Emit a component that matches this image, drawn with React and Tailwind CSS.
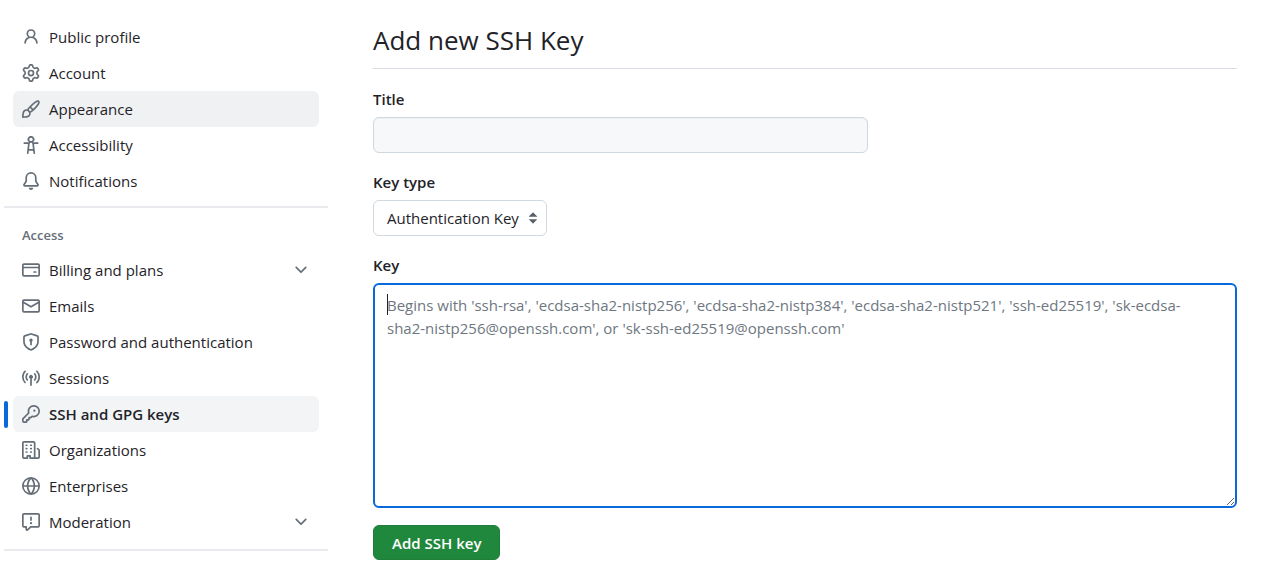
import React, { useState } from 'react';

const icons = {
    person: 'M10.561 8.073a6.005 6.005 0 0 1 3.432 5.142.75.75 0 1 1-1.498.07 4.5 4.5 0 0 0-8.99 0 .75.75 0 0 1-1.498-.07 6.004 6.004 0 0 1 3.431-5.142 3.999 3.999 0 1 1 5.123 0ZM10.5 5a2.5 2.5 0 1 0-5 0 2.5 2.5 0 0 0 5 0Z',
    gear: 'M8 0a8.2 8.2 0 0 1 .701.031C9.444.095 9.99.645 10.16 1.29l.288 1.107c.018.066.079.158.212.224.231.114.454.243.668.386.123.082.233.09.299.071l1.103-.303c.644-.176 1.392.021 1.82.63.27.385.506.792.704 1.218.315.675.111 1.422-.364 1.891l-.814.806c-.049.048-.098.147-.088.294.016.257.016.515 0 .772-.01.147.038.246.088.294l.814.806c.475.469.679 1.216.364 1.891a7.977 7.977 0 0 1-.704 1.217c-.428.61-1.176.807-1.82.63l-1.102-.302c-.067-.019-.177-.011-.3.071a5.909 5.909 0 0 1-.668.386c-.133.066-.194.158-.211.224l-.29 1.106c-.168.646-.715 1.196-1.458 1.26a8.006 8.006 0 0 1-1.402 0c-.743-.064-1.289-.614-1.458-1.26l-.289-1.106c-.018-.066-.079-.158-.212-.224a5.738 5.738 0 0 1-.668-.386c-.123-.082-.233-.09-.299-.071l-1.103.303c-.644.176-1.392-.021-1.82-.63a8.12 8.12 0 0 1-.704-1.218c-.315-.675-.111-1.422.363-1.891l.815-.806c.05-.048.098-.147.088-.294a6.214 6.214 0 0 1 0-.772c.01-.147-.038-.246-.088-.294l-.815-.806C.635 6.045.431 5.298.746 4.623a7.92 7.92 0 0 1 .704-1.217c.428-.61 1.176-.807 1.82-.63l1.102.302c.067.019.177.011.3-.071.214-.143.437-.272.668-.386.133-.066.194-.158.211-.224l.29-1.106C6.009.645 6.556.095 7.299.03 7.53.01 7.764 0 8 0Zm-.571 1.525c-.036.003-.108.036-.137.146l-.289 1.105c-.147.561-.549.967-.998 1.189-.173.086-.34.183-.5.29-.417.278-.97.423-1.529.27l-1.103-.303c-.109-.03-.175.016-.195.045-.22.312-.412.644-.573.99-.014.031-.021.11.059.19l.815.806c.411.406.562.957.53 1.456a4.709 4.709 0 0 0 0 .582c.032.499-.119 1.05-.53 1.456l-.815.806c-.081.08-.073.159-.059.19.162.346.353.677.573.989.02.03.085.076.195.046l1.102-.303c.56-.153 1.113-.008 1.53.27.161.107.328.204.501.29.447.222.85.629.997 1.189l.289 1.105c.029.109.101.143.137.146a6.6 6.6 0 0 0 1.142 0c.036-.003.108-.036.137-.146l.289-1.105c.147-.561.549-.967.998-1.189.173-.086.34-.183.5-.29.417-.278.97-.423 1.529-.27l1.103.303c.109.029.175-.016.195-.045.22-.313.411-.644.573-.99.014-.031.021-.11-.059-.19l-.815-.806c-.411-.406-.562-.957-.53-1.456a4.709 4.709 0 0 0 0-.582c-.032-.499.119-1.05.53-1.456l.815-.806c.081-.08.073-.159.059-.19a6.464 6.464 0 0 0-.573-.989c-.02-.03-.085-.076-.195-.046l-1.102.303c-.56.153-1.113.008-1.53-.27a4.44 4.44 0 0 0-.501-.29c-.447-.222-.85-.629-.997-1.189l-.289-1.105c-.029-.11-.101-.143-.137-.146a6.6 6.6 0 0 0-1.142 0ZM11 8a3 3 0 1 1-6 0 3 3 0 0 1 6 0ZM9.5 8a1.5 1.5 0 1 0-3.001.001A1.5 1.5 0 0 0 9.5 8Z',
    paintbrush: 'M11.134 1.535c.7-.509 1.416-.942 2.076-1.155.649-.21 1.463-.267 2.069.34.603.601.568 1.411.368 2.07-.202.668-.624 1.39-1.125 2.096-1.011 1.424-2.496 2.987-3.775 4.249-1.098 1.084-2.132 1.839-3.04 2.3a3.744 3.744 0 0 1-1.055 3.217c-.431.431-1.065.691-1.657.861-.614.177-1.294.287-1.914.357A21.151 21.151 0 0 1 .797 16H.743l.007-.75H.749L.742 16a.75.75 0 0 1-.743-.742l.743-.008-.742.007v-.054a21.25 21.25 0 0 1 .13-2.284c.067-.647.187-1.287.358-1.914.17-.591.43-1.226.86-1.657a3.746 3.746 0 0 1 3.227-1.054c.466-.893 1.225-1.907 2.314-2.982 1.271-1.255 2.833-2.75 4.245-3.777ZM1.62 13.089c-.051.464-.086.929-.104 1.395.466-.018.932-.053 1.396-.104a10.511 10.511 0 0 0 1.668-.309c.526-.151.856-.325 1.011-.48a2.25 2.25 0 1 0-3.182-3.182c-.155.155-.329.485-.48 1.01a10.515 10.515 0 0 0-.309 1.67Zm10.396-10.34c-1.224.89-2.605 2.189-3.822 3.384l1.718 1.718c1.21-1.205 2.51-2.597 3.387-3.833.47-.662.78-1.227.912-1.662.134-.444.032-.551.009-.575h-.001V1.78c-.014-.014-.113-.113-.548.027-.432.14-.995.462-1.655.942Zm-4.832 7.266-.001.001a9.859 9.859 0 0 0 1.63-1.142L7.155 7.216a9.7 9.7 0 0 0-1.161 1.607c.482.302.889.71 1.19 1.192Z',
    accessibility: 'M9.923 5.302c.063.063.122.129.178.198H14A.75.75 0 0 1 14 7h-3.3l.578 5.163.362 2.997a.75.75 0 0 1-1.49.18L9.868 13H6.132l-.282 2.34a.75.75 0 0 1-1.49-.18l.362-2.997L5.3 7H2a.75.75 0 0 1 0-1.5h3.9a2.54 2.54 0 0 1 .176-.198 3 3 0 1 1 3.847 0ZM9.2 7.073h-.001a1.206 1.206 0 0 0-2.398 0L6.305 11.5h3.39ZM9.5 3a1.5 1.5 0 1 0-3.001.001A1.5 1.5 0 0 0 9.5 3Z',
    bell: 'M8 16a2 2 0 0 0 1.985-1.75c.017-.137-.097-.25-.235-.25h-3.5c-.138 0-.252.113-.235.25A2 2 0 0 0 8 16ZM3 5a5 5 0 0 1 10 0v2.947c0 .05.015.098.042.139l1.703 2.555A1.519 1.519 0 0 1 13.482 13H2.518a1.516 1.516 0 0 1-1.263-2.36l1.703-2.554A.255.255 0 0 0 3 7.947Zm5-3.5A3.5 3.5 0 0 0 4.5 5v2.947c0 .346-.102.683-.294.97l-1.703 2.556a.017.017 0 0 0-.003.01l.001.006c0 .002.002.004.004.006l.006.004.007.001h10.964l.007-.001.006-.004.004-.006.001-.007a.017.017 0 0 0-.003-.01l-1.703-2.554a1.745 1.745 0 0 1-.294-.97V5A3.5 3.5 0 0 0 8 1.5Z',
    creditCard: 'M10.75 9a.75.75 0 0 0 0 1.5h1.5a.75.75 0 0 0 0-1.5h-1.5ZM0 3.75C0 2.784.784 2 1.75 2h12.5c.966 0 1.75.784 1.75 1.75v8.5A1.75 1.75 0 0 1 14.25 14H1.75A1.75 1.75 0 0 1 0 12.25ZM14.5 6.5h-13v5.75c0 .138.112.25.25.25h12.5a.25.25 0 0 0 .25-.25Zm0-2.75a.25.25 0 0 0-.25-.25H1.75a.25.25 0 0 0-.25.25V5h13Z',
    mail: 'M1.75 2h12.5c.966 0 1.75.784 1.75 1.75v8.5A1.75 1.75 0 0 1 14.25 14H1.75A1.75 1.75 0 0 1 0 12.25v-8.5C0 2.784.784 2 1.75 2ZM1.5 12.251c0 .138.112.25.25.25h12.5a.25.25 0 0 0 .25-.25V5.809L8.38 9.397a.75.75 0 0 1-.76 0L1.5 5.809v6.442Zm13-8.181v-.32a.25.25 0 0 0-.25-.25H1.75a.25.25 0 0 0-.25.25v.32L8 7.88Z',
    shieldLock: 'm8.533.133 5.25 1.68A1.75 1.75 0 0 1 15 3.48V7c0 1.566-.32 3.182-1.303 4.682-.983 1.498-2.585 2.813-5.032 3.855a1.697 1.697 0 0 1-1.33 0c-2.447-1.042-4.049-2.357-5.032-3.855C1.32 10.182 1 8.566 1 7V3.48a1.75 1.75 0 0 1 1.217-1.667l5.25-1.68a1.748 1.748 0 0 1 1.066 0Zm-.61 1.429.001.001-5.25 1.68a.251.251 0 0 0-.174.237V7c0 1.36.275 2.666 1.057 3.859.784 1.194 2.121 2.342 4.366 3.298a.196.196 0 0 0 .154 0c2.245-.957 3.582-2.103 4.366-3.297C13.225 9.666 13.5 8.358 13.5 7V3.48a.25.25 0 0 0-.174-.238l-5.25-1.68a.25.25 0 0 0-.153 0ZM9.5 6.5c0 .536-.286 1.032-.75 1.3v2.45a.75.75 0 0 1-1.5 0V7.8A1.5 1.5 0 1 1 9.5 6.5Z',
    broadcast: 'M8.75 8.582v5.668a.75.75 0 0 1-1.5 0V8.582a1.75 1.75 0 1 1 1.5 0Zm3.983-7.125a.75.75 0 0 1 1.06.026A7.976 7.976 0 0 1 16 7c0 2.139-.84 4.083-2.207 5.517a.75.75 0 1 1-1.086-1.034A6.474 6.474 0 0 0 14.5 7a6.474 6.474 0 0 0-1.793-4.483.75.75 0 0 1 .026-1.06Zm-9.466 0c.3.286.312.76.026 1.06A6.474 6.474 0 0 0 1.5 7a6.47 6.47 0 0 0 1.793 4.483.75.75 0 0 1-1.086 1.034A7.973 7.973 0 0 1 0 7c0-2.139.84-4.083 2.207-5.517a.75.75 0 0 1 1.06-.026Zm8.556 2.321A4.988 4.988 0 0 1 13 7a4.988 4.988 0 0 1-1.177 3.222.75.75 0 1 1-1.146-.967A3.487 3.487 0 0 0 11.5 7c0-.86-.309-1.645-.823-2.255a.75.75 0 0 1 1.146-.967Zm-6.492.958A3.48 3.48 0 0 0 4.5 7a3.48 3.48 0 0 0 .823 2.255.75.75 0 0 1-1.146.967A4.981 4.981 0 0 1 3 7a4.982 4.982 0 0 1 1.188-3.236.75.75 0 1 1 1.143.972Z',
    key: 'M10.5 0a5.499 5.499 0 1 1-1.288 10.848l-.932.932a.749.749 0 0 1-.53.22H7v.75a.749.749 0 0 1-.22.53l-.5.5a.749.749 0 0 1-.53.22H5v.75a.749.749 0 0 1-.22.53l-.5.5a.749.749 0 0 1-.53.22h-2A1.75 1.75 0 0 1 0 14.25v-2c0-.199.079-.389.22-.53l4.932-4.932A5.5 5.5 0 0 1 10.5 0Zm-4 5.5c-.001.431.069.86.205 1.269a.75.75 0 0 1-.181.768L1.5 12.56v1.69c0 .138.112.25.25.25h1.69l.06-.06v-1.19a.75.75 0 0 1 .75-.75h1.19l.06-.06v-1.19a.75.75 0 0 1 .75-.75h1.19l1.023-1.025a.75.75 0 0 1 .768-.18A4 4 0 1 0 6.5 5.5ZM11 6a1 1 0 1 1 0-2 1 1 0 0 1 0 2Z',
    organization: 'M1.75 16A1.75 1.75 0 0 1 0 14.25V1.75C0 .784.784 0 1.75 0h8.5C11.216 0 12 .784 12 1.75v12.5c0 .085-.006.168-.018.25h2.268a.25.25 0 0 0 .25-.25V8.285a.25.25 0 0 0-.111-.208l-1.055-.703a.749.749 0 1 1 .832-1.248l1.055.703c.487.325.779.871.779 1.456v5.965A1.75 1.75 0 0 1 14.25 16h-3.5a.766.766 0 0 1-.197-.026c-.099.017-.2.026-.303.026h-3a.75.75 0 0 1-.75-.75V14h-1v1.25a.75.75 0 0 1-.75.75Zm-.25-1.75c0 .138.112.25.25.25H4v-1.25a.75.75 0 0 1 .75-.75h2.5a.75.75 0 0 1 .75.75v1.25h2.25a.25.25 0 0 0 .25-.25V1.75a.25.25 0 0 0-.25-.25h-8.5a.25.25 0 0 0-.25.25ZM3.75 6h.5a.75.75 0 0 1 0 1.5h-.5a.75.75 0 0 1 0-1.5ZM3 3.75A.75.75 0 0 1 3.75 3h.5a.75.75 0 0 1 0 1.5h-.5A.75.75 0 0 1 3 3.75Zm4 3A.75.75 0 0 1 7.75 6h.5a.75.75 0 0 1 0 1.5h-.5A.75.75 0 0 1 7 6.75ZM7.75 3h.5a.75.75 0 0 1 0 1.5h-.5a.75.75 0 0 1 0-1.5ZM3 9.75A.75.75 0 0 1 3.75 9h.5a.75.75 0 0 1 0 1.5h-.5A.75.75 0 0 1 3 9.75ZM7.75 9h.5a.75.75 0 0 1 0 1.5h-.5a.75.75 0 0 1 0-1.5Z',
    globe: 'M8 0a8 8 0 1 1 0 16A8 8 0 0 1 8 0ZM5.78 8.75a9.64 9.64 0 0 0 1.363 4.177c.255.426.542.832.857 1.215.245-.296.551-.705.857-1.215A9.64 9.64 0 0 0 10.22 8.75Zm4.44-1.5a9.64 9.64 0 0 0-1.363-4.177c-.307-.51-.612-.919-.857-1.215a9.927 9.927 0 0 0-.857 1.215A9.64 9.64 0 0 0 5.78 7.25Zm-5.944 1.5H1.543a6.507 6.507 0 0 0 4.666 5.5c-.123-.181-.24-.365-.352-.552-.715-1.192-1.437-2.874-1.581-4.948Zm-2.733-1.5h2.733c.144-2.074.866-3.756 1.58-4.948.12-.197.237-.381.353-.552a6.507 6.507 0 0 0-4.666 5.5Zm10.181 1.5c-.144 2.074-.866 3.756-1.58 4.948-.12.197-.237.381-.353.552a6.507 6.507 0 0 0 4.666-5.5Zm2.733-1.5a6.507 6.507 0 0 0-4.666-5.5c.123.181.24.365.353.552.714 1.192 1.436 2.874 1.58 4.948Z',
    report: 'M0 1.75C0 .784.784 0 1.75 0h12.5C15.216 0 16 .784 16 1.75v9.5A1.75 1.75 0 0 1 14.25 13H8.06l-2.573 2.573A1.458 1.458 0 0 1 3 14.543V13H1.75A1.75 1.75 0 0 1 0 11.25Zm1.75-.25a.25.25 0 0 0-.25.25v9.5c0 .138.112.25.25.25h2a.75.75 0 0 1 .75.75v2.19l2.72-2.72a.749.749 0 0 1 .53-.22h6.5a.25.25 0 0 0 .25-.25v-9.5a.25.25 0 0 0-.25-.25Zm7 2.25v2.5a.75.75 0 0 1-1.5 0v-2.5a.75.75 0 0 1 1.5 0ZM9 9a1 1 0 1 1-2 0 1 1 0 0 1 2 0Z',
    chevronDown: 'M12.78 5.22a.749.749 0 0 1 0 1.06l-4.25 4.25a.749.749 0 0 1-1.06 0L3.22 6.28a.749.749 0 1 1 1.06-1.06L8 8.939l3.72-3.719a.749.749 0 0 1 1.06 0Z',
    sort: 'M4.427 9.427l3.396 3.396a.251.251 0 0 0 .354 0l3.396-3.396A.25.25 0 0 0 11.396 9H4.604a.25.25 0 0 0-.177.427ZM4.423 6.47L7.82 3.072a.25.25 0 0 1 .354 0L11.57 6.47a.25.25 0 0 1-.177.427H4.6a.25.25 0 0 1-.177-.427Z',
};

const accountLinks = [
    { label: 'Public profile', icon: 'person' },
    { label: 'Account', icon: 'gear' },
    { label: 'Appearance', icon: 'paintbrush', highlighted: true },
    { label: 'Accessibility', icon: 'accessibility' },
    { label: 'Notifications', icon: 'bell' },
];

const accessLinks = [
    { label: 'Billing and plans', icon: 'creditCard', expandable: true },
    { label: 'Emails', icon: 'mail' },
    { label: 'Password and authentication', icon: 'shieldLock' },
    { label: 'Sessions', icon: 'broadcast' },
    { label: 'SSH and GPG keys', icon: 'key', current: true },
    { label: 'Organizations', icon: 'organization' },
    { label: 'Enterprises', icon: 'globe' },
    { label: 'Moderation', icon: 'report', expandable: true },
];

const Icon = ({ name, className = '' }) => (
    <svg viewBox="0 0 16 16" fill="currentColor" aria-hidden="true" className={`size-[18px] shrink-0 ${className}`}>
        <path d={icons[name]} />
    </svg>
);

const NavItem = ({ label, icon, highlighted, current, expandable }) => {
    const itemClass = `flex h-9 w-full items-center gap-[9px] rounded-md px-[9px] text-left ${
        highlighted ? 'bg-[#f0f1f3]' : current ? 'bg-[#f3f4f6] font-semibold' : 'hover:bg-[#f3f4f6]'
    }`;

    return (
        <li className="relative px-[9px]">
            {current && <span className="absolute top-[5px] left-0 h-[27px] w-1 rounded-md bg-[#0969da]" />}
            {expandable ? (
                <button type="button" className={itemClass}>
                    <Icon name={icon} className="text-[#656d76]" />
                    <span className="flex-1">{label}</span>
                    <Icon name="chevronDown" className="text-[#656d76]" />
                </button>
            ) : (
                <a href="#" className={itemClass} aria-current={current ? 'page' : undefined}>
                    <Icon name={icon} className="text-[#656d76]" />
                    <span>{label}</span>
                </a>
            )}
        </li>
    );
};

const Sidebar = () => (
    <nav className="w-[324px] shrink-0">
        <ul>
            {accountLinks.map((link) => (
                <NavItem key={link.label} {...link} />
            ))}
        </ul>
        <hr className="mt-[7px] border-t-2 border-[#e8eaed]" />
        <h2 className="px-[18px] pt-[17px] pb-[7px] text-[13px] leading-5 font-semibold text-[#656d76]">Access</h2>
        <ul>
            {accessLinks.map((link) => (
                <NavItem key={link.label} {...link} />
            ))}
        </ul>
        <hr className="mt-[9px] border-t-2 border-[#e8eaed]" />
    </nav>
);

const AddKeyForm = () => {
    const [title, setTitle] = useState('');
    const [key, setKey] = useState('');

    return (
        <form onSubmit={(e) => e.preventDefault()}>
            <label htmlFor="title" className="block font-semibold">
                Title
            </label>
            <input
                id="title"
                type="text"
                value={title}
                onChange={(e) => setTitle(e.target.value)}
                className="mt-[6px] block h-9 w-full max-w-[495px] rounded-md border border-[#d0d7de] bg-[#f6f8fa] px-[13px] shadow-[inset_0_1px_0_rgba(208,215,222,0.2)] outline-none"
            />

            <label htmlFor="key-type" className="mt-[17px] block font-semibold">
                Key type
            </label>
            <div className="relative mt-[6px] inline-block align-top">
                <select
                    id="key-type"
                    className="block h-9 w-[174px] appearance-none rounded-md border border-[#d0d7de] bg-white px-[13px] outline-none"
                >
                    <option>Authentication Key</option>
                    <option>Signing Key</option>
                </select>
                <Icon name="sort" className="pointer-events-none absolute top-[9px] right-[5px] text-[#586069]" />
            </div>

            <label htmlFor="key" className="mt-[17px] block font-semibold">
                Key
            </label>
            <div className="relative mt-[6px]">
                <textarea
                    id="key"
                    value={key}
                    onChange={(e) => setKey(e.target.value)}
                    placeholder="Begins with 'ssh-rsa', 'ecdsa-sha2-nistp256', 'ecdsa-sha2-nistp384', 'ecdsa-sha2-nistp521', 'ssh-ed25519', 'sk-ecdsa-sha2-nistp256@openssh.com', or 'sk-ssh-ed25519@openssh.com'"
                    className="block h-[225px] w-full resize rounded-md border-2 border-[#0969da] bg-white py-[9px] pr-6 pl-3 leading-[23px] outline-none placeholder:text-[#6e7781]"
                />
                {/* text cursor */}
                {key === '' && <span className="pointer-events-none absolute top-[11px] left-[14px] h-[21px] w-px bg-[#1f2328]" />}
            </div>

            <button
                type="submit"
                className="mt-[17px] h-[35px] rounded-md border border-[#1f7f3a] bg-[#1f883d] px-[18px] font-semibold text-white"
            >
                Add SSH key
            </button>
        </form>
    );
};

const App = () => (
    <div className="flex gap-[45px] bg-white pt-[19px] pr-[37px] pb-[11px] pl-1 font-['Open_Sans','Noto_Sans',sans-serif] text-[15px] leading-6 text-[#1f2328]">
        <Sidebar />
        <main className="min-w-0 flex-1">
            <h1 className="mb-[18px] border-b border-[#d8dee4] pt-[3px] pb-[10px] text-[26px] leading-9">Add new SSH Key</h1>
            <AddKeyForm />
        </main>
    </div>
);

export default App;
